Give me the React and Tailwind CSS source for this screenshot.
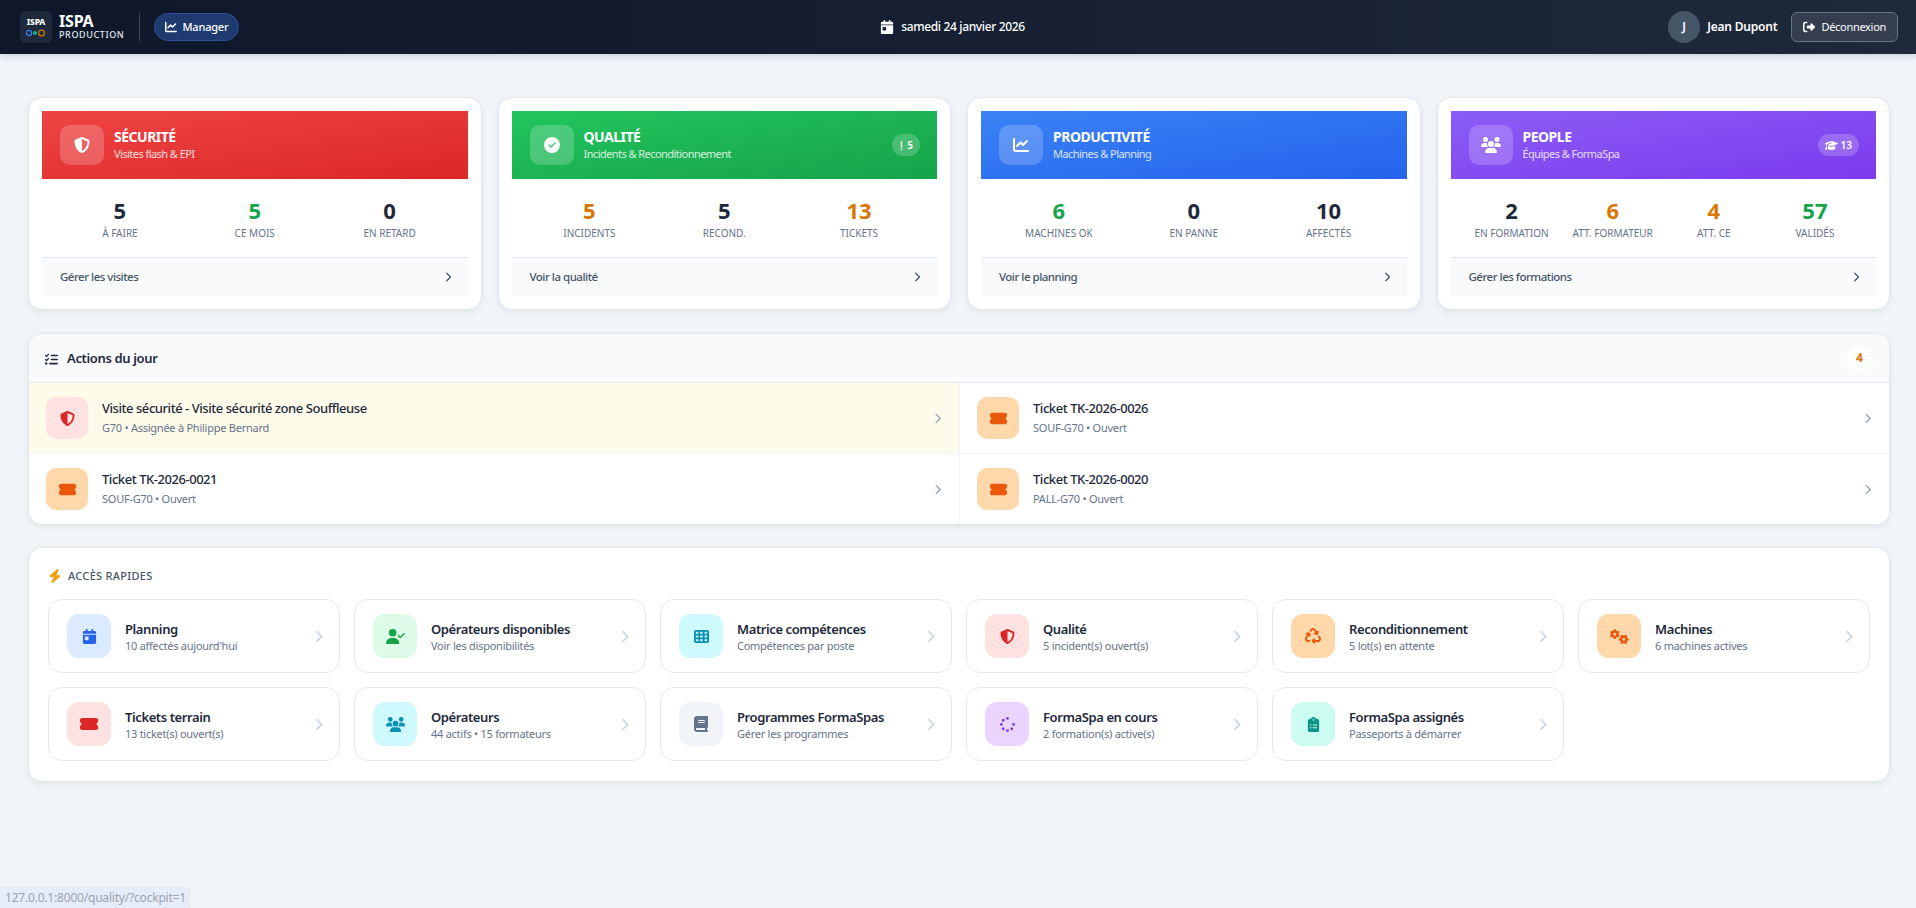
import React from "react";
import {
  FaShieldHalved, FaCircleCheck, FaChartLine, FaUsers, FaGraduationCap, FaTicketSimple, FaListCheck, FaBolt,
  FaCalendarDay, FaUserCheck, FaTableCells, FaRecycle, FaGears, FaBook, FaSpinner, FaClipboardList,
  FaRightFromBracket, FaChevronRight, FaExclamation,
} from "react-icons/fa6";

const NAVY = "text-[#1e293b]";
const GREEN = "text-[#16a34a]";
const ORANGE = "text-[#d97706]";

const pillars = [
  {
    title: "SÉCURITÉ", sub: "Visites flash & EPI", grad: "bg-gradient-to-br from-[#ef4444] to-[#dc2626]", Icon: FaShieldHalved, size: "text-[16px]",
    stats: [["5", "À faire", NAVY], ["5", "Ce mois", GREEN], ["0", "En retard", NAVY]], link: "Gérer les visites",
  },
  {
    title: "QUALITÉ", sub: "Incidents & Reconditionnement", grad: "bg-gradient-to-br from-[#22c55e] to-[#16a34a]", Icon: FaCircleCheck, size: "text-[16px]",
    badge: <><FaExclamation className="h-[11px] w-[5px]" /><span>5</span></>,
    stats: [["5", "Incidents", ORANGE], ["5", "Recond.", NAVY], ["13", "Tickets", ORANGE]], link: "Voir la qualité",
  },
  {
    title: "PRODUCTIVITÉ", sub: "Machines & Planning", grad: "bg-gradient-to-br from-[#3b82f6] to-[#2563eb]", Icon: FaChartLine, size: "text-[16px]",
    stats: [["6", "Machines OK", GREEN], ["0", "En panne", NAVY], ["10", "Affectés", NAVY]], link: "Voir le planning",
  },
  {
    title: "PEOPLE", sub: "Équipes & FormaSpa", grad: "bg-gradient-to-br from-[#8b5cf6] to-[#7c3aed]", Icon: FaUsers, size: "text-[20px]",
    badge: <><FaGraduationCap className="text-[13px]" /><span>13</span></>,
    stats: [["2", "En formation", NAVY], ["6", "Att. formateur", ORANGE], ["4", "Att. CE", ORANGE], ["57", "Validés", GREEN]], link: "Gérer les formations",
  },
];

const actions = [
  { title: "Visite sécurité - Visite sécurité zone Souffleuse", sub: "G70 • Assignée à Philippe Bernard", Icon: FaShieldHalved, size: "text-[15px]", box: "bg-[#fee2e2] text-[#dc2626]", row: "bg-[#fffbeb]" },
  { title: "Ticket TK-2026-0026", sub: "SOUF-G70 • Ouvert", Icon: FaTicketSimple, size: "text-[17px]", box: "bg-[#fed7aa] text-[#ea580c]", row: "bg-white" },
  { title: "Ticket TK-2026-0021", sub: "SOUF-G70 • Ouvert", Icon: FaTicketSimple, size: "text-[17px]", box: "bg-[#fed7aa] text-[#ea580c]", row: "bg-white" },
  { title: "Ticket TK-2026-0020", sub: "PALL-G70 • Ouvert", Icon: FaTicketSimple, size: "text-[17px]", box: "bg-[#fed7aa] text-[#ea580c]", row: "bg-white" },
];

const quick = [
  { t: "Planning", s: "10 affectés aujourd'hui", Icon: FaCalendarDay, size: "text-[15px]", box: "bg-[#dbeafe] text-[#2563eb]" },
  { t: "Opérateurs disponibles", s: "Voir les disponibilités", Icon: FaUserCheck, size: "text-[19px]", box: "bg-[#dcfce7] text-[#16a34a]" },
  { t: "Matrice compétences", s: "Compétences par poste", Icon: FaTableCells, size: "text-[15px]", box: "bg-[#cffafe] text-[#0891b2]" },
  { t: "Qualité", s: "5 incident(s) ouvert(s)", Icon: FaShieldHalved, size: "text-[15px]", box: "bg-[#fee2e2] text-[#dc2626]" },
  { t: "Reconditionnement", s: "5 lot(s) en attente", Icon: FaRecycle, size: "text-[16px]", box: "bg-[#fed7aa] text-[#ea580c]" },
  { t: "Machines", s: "6 machines actives", Icon: FaGears, size: "text-[19px]", box: "bg-[#fed7aa] text-[#ea580c]" },
  { t: "Tickets terrain", s: "13 ticket(s) ouvert(s)", Icon: FaTicketSimple, size: "text-[18px]", box: "bg-[#fee2e2] text-[#dc2626]" },
  { t: "Opérateurs", s: "44 actifs • 15 formateurs", Icon: FaUsers, size: "text-[19px]", box: "bg-[#cffafe] text-[#0891b2]" },
  { t: "Programmes FormaSpas", s: "Gérer les programmes", Icon: FaBook, size: "text-[16px]", box: "bg-[#f1f5f9] text-[#64748b]" },
  { t: "FormaSpa en cours", s: "2 formation(s) active(s)", Icon: FaSpinner, size: "text-[15px]", box: "bg-[#e9d5ff] text-[#7c3aed]" },
  { t: "FormaSpa assignés", s: "Passeports à démarrer", Icon: FaClipboardList, size: "text-[15px]", box: "bg-[#ccfbf1] text-[#0d9488]" },
];

function Logo() {
  return (
    <div className="flex h-8 w-8 flex-col items-center justify-center rounded-[6px] bg-[#1e293b]">
      <span className="text-[8.5px] font-extrabold leading-[9px] tracking-[-0.2px] text-white">ISPA</span>
      <svg width="22" height="8" viewBox="0 0 22 8" className="mt-[3px]">
        <circle cx="4" cy="4" r="2.6" fill="none" stroke="#3b82f6" strokeWidth="1.2" />
        <circle cx="10" cy="4" r="2" fill="#10b981" />
        <circle cx="16.5" cy="4" r="2.9" fill="none" stroke="#d97706" strokeWidth="1.2" />
      </svg>
    </div>
  );
}

function Pillar({ p }) {
  const cols = p.stats.length === 4 ? "grid-cols-4" : "grid-cols-3";
  return (
    <div className="rounded-[14px] border border-[#e2e8f0] bg-white p-[13px] shadow-[0_2px_6px_rgba(15,23,42,0.08)]">
      <div className={`flex h-[68px] items-center gap-[10px] pl-[18px] pr-[17px] ${p.grad}`}>
        <div className={`flex h-10 w-11 items-center justify-center rounded-[10px] bg-white/20 text-white ${p.size}`}>
          <p.Icon />
        </div>
        <div className="flex-1">
          <div className="text-[14px] font-bold leading-[18px] tracking-[-0.5px] text-white">{p.title}</div>
          <div className="text-[11px] leading-[16px] tracking-[-0.55px] text-white/80">{p.sub}</div>
        </div>
        {p.badge && (
          <div className="flex h-[22px] items-center gap-[3px] rounded-full bg-white/20 px-[7px] text-[10px] font-semibold text-white">
            {p.badge}
          </div>
        )}
      </div>
      <div className={`grid ${cols} h-[78px] gap-[15px] px-[18px] pt-[18px]`}>
        {p.stats.map(([v, l, c]) => (
          <div key={l} className="text-center">
            <div className={`text-[22px] font-bold leading-[26px] ${c}`}>{v}</div>
            <div className="mt-[3px] whitespace-nowrap text-[10px] uppercase leading-[14px] tracking-[0px] text-[#64748b]">{l}</div>
          </div>
        ))}
      </div>
      <div className="flex h-[39px] items-center justify-between border-t border-[#e2e8f0] bg-[#f8fafc] pl-[18px] pr-[15px] text-[11.5px] font-medium tracking-[-0.5px] text-[#475569]">
        <span>{p.link}</span>
        <FaChevronRight className="text-[10px]" />
      </div>
    </div>
  );
}

function ActionRow({ a, i }) {
  return (
    <div className={`flex items-center gap-[14px] pl-[17px] pr-4 ${i < 2 ? "h-[71px] border-b border-[#f1f5f9]" : "h-[70px]"} ${a.row} ${i % 2 ? "border-l border-[#f1f5f9]" : ""}`}>
      <div className={`flex h-[42px] w-[42px] items-center justify-center rounded-[10px] ${a.size} ${a.box}`}>
        <a.Icon />
      </div>
      <div className="flex-1 pb-[2px]">
        <div className="text-[13px] font-medium leading-[18px] tracking-[-0.45px] text-[#1e293b]">{a.title}</div>
        <div className="mt-[3px] text-[11px] leading-[16px] tracking-[-0.25px] text-[#64748b]">{a.sub}</div>
      </div>
      <FaChevronRight className="text-[11px] text-[#94a3b8]" />
    </div>
  );
}

function QuickCard({ q }) {
  return (
    <div className="flex h-[74px] items-center gap-[14px] rounded-[14px] border border-[#e2e8f0] bg-white pl-[18px] pr-[14px]">
      <div className={`flex h-11 w-11 items-center justify-center rounded-[12px] ${q.size} ${q.box}`}>
        <q.Icon />
      </div>
      <div className="min-w-0 flex-1">
        <div className="text-[13px] font-semibold leading-[18px] tracking-[-0.4px] text-[#1e293b]">{q.t}</div>
        <div className="text-[11px] leading-[15px] tracking-[-0.26px] text-[#64748b]">{q.s}</div>
      </div>
      <FaChevronRight className="text-[13px] text-[#cbd5e1]" />
    </div>
  );
}

export default function App() {
  return (
    <div className="relative min-h-[908px] overflow-hidden bg-[#f1f5f9] font-['Noto_Sans','Open_Sans',sans-serif]">
      <header className="flex h-[54px] items-center justify-between bg-gradient-to-r from-[#0f172a] to-[#1e293b] pl-5 pr-[18px] shadow-[0_2px_8px_rgba(15,23,42,0.18)]">
        <div className="flex w-[487px] items-center">
          <Logo />
          <div className="ml-[7px]">
            <div className="text-[16px] font-bold leading-[16px] tracking-[-0.2px] text-white">ISPA</div>
            <div className="text-[9px] font-medium leading-[12px] tracking-[0.6px] text-[#e2e8f0]">PRODUCTION</div>
          </div>
          <div className="ml-[15px] h-7 w-px bg-white/20" />
          <div className="ml-[14px] flex h-7 items-center gap-[5px] rounded-full border border-[#2a4f9c] bg-[#1e3a6e] px-[10px] text-[11px] font-medium tracking-[-0.2px] text-white">
            <FaChartLine className="text-[12px]" />
            Manager
          </div>
        </div>
        <div className="flex items-center gap-[7px] text-[12px] font-medium tracking-[-0.35px] text-white">
          <FaCalendarDay className="text-[14px]" />
          samedi 24 janvier 2026
        </div>
        <div className="flex w-[500px] items-center justify-end">
          <div className="flex h-8 w-8 items-center justify-center rounded-full bg-[#475569] text-[12px] font-semibold text-white">J</div>
          <span className="ml-[7px] text-[12px] font-semibold tracking-[-0.2px] text-white">Jean Dupont</span>
          <div className="ml-[14px] flex h-[30px] items-center gap-[6px] rounded-[6px] border border-[#64748b] bg-white/10 px-[11px] text-[11px] tracking-[-0.3px] text-white">
            <FaRightFromBracket className="text-[12px]" />
            Déconnexion
          </div>
        </div>
      </header>

      <main className="flex flex-col gap-[22px] pl-7 pr-[26px] pt-[43px]">
        <div className="grid grid-cols-4 gap-4">
          {pillars.map((p) => <Pillar key={p.title} p={p} />)}
        </div>

        <section className="mt-px overflow-hidden rounded-[14px] border border-[#e2e8f0] bg-white shadow-[0_2px_6px_rgba(15,23,42,0.08)]">
          <div className="flex h-[49px] items-center justify-between border-b border-[#e2e8f0] bg-[#f8fafc] pl-4 pr-[16px]">
            <div className="flex items-center gap-[9px] pt-[2px] text-[13px] font-semibold tracking-[-0.35px] text-[#1e293b]">
              <FaListCheck className="text-[13px]" />
              Actions du jour
            </div>
            <div className="flex h-[25px] w-[27px] items-center justify-center rounded-full bg-white text-[12px] font-bold text-[#d97706]">4</div>
          </div>
          <div className="grid grid-cols-2">
            {actions.map((a, i) => <ActionRow key={a.title} a={a} i={i} />)}
          </div>
        </section>

        <section className="rounded-[14px] border border-[#e2e8f0] bg-white px-[19px] pb-5 pt-[19px] shadow-[0_2px_6px_rgba(15,23,42,0.08)]">
          <div className="mb-[14px] flex h-[18px] items-center gap-[6px] text-[11px] font-medium uppercase tracking-[0.3px] text-[#475569]">
            <FaBolt className="text-[14px] text-[#f59e0b]" />
            Accès rapides
          </div>
          <div className="grid grid-cols-6 gap-[14px]">
            {quick.map((q) => <QuickCard key={q.t} q={q} />)}
          </div>
        </section>
      </main>

      <div className="absolute bottom-0 left-0 flex h-[21px] w-[190px] items-center whitespace-nowrap rounded-tr-[4px] bg-[#e4edf9] pl-[5px] text-[12px] tracking-[-0.2px] text-[#9ca3af]">
        127.0.0.1:8000/quality/?cockpit=1
      </div>
    </div>
  );
}
